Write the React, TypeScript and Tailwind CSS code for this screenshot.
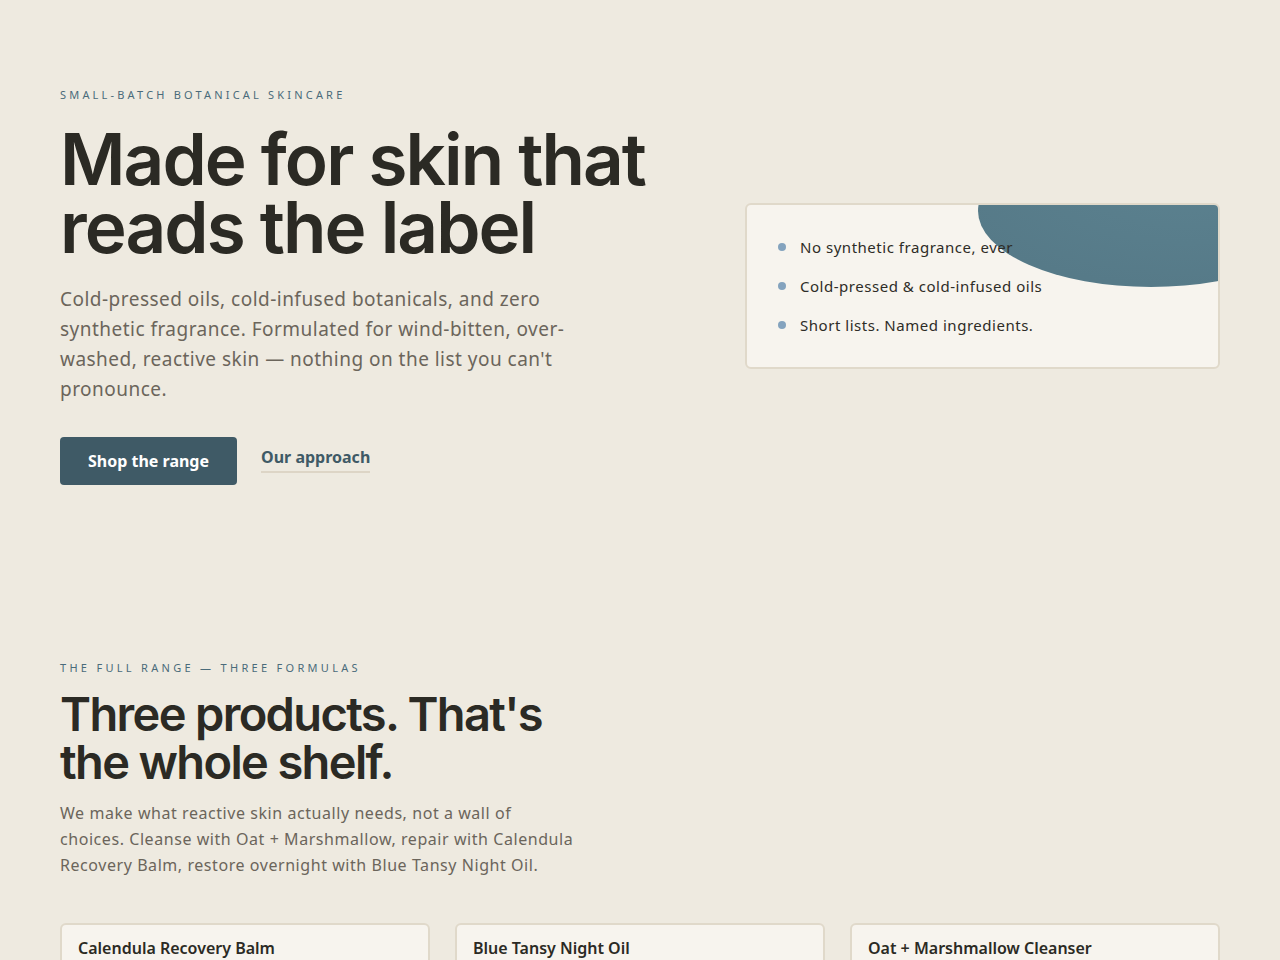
import React from 'react'

const points = [
  'No synthetic fragrance, ever',
  'Cold-pressed & cold-infused oils',
  'Short lists. Named ingredients.',
]

const products = [
  { name: 'Calendula Recovery Balm' },
  { name: 'Blue Tansy Night Oil' },
  { name: 'Oat + Marshmallow Cleanser' },
]

const body = "font-['Noto_Sans',sans-serif]"
const display = "font-['Inter',sans-serif]"

export default function App() {
  return (
    <div className={`min-h-screen bg-[#eeeae0] ${body}`}>
      <div className="px-[60px]">
        {/* hero */}
        <section className="grid grid-cols-[1fr_475px] gap-16 items-center pt-[87px]">
          <div>
            <div className="text-[11px] tracking-[0.29em] text-[#4a6b7a] uppercase leading-4">
              Small-batch botanical skincare
            </div>
            <h1 className={`${display} mt-[22px] text-[71px] leading-[68px] font-semibold tracking-[-0.027em] text-[#2b2a24]`}>
              Made for skin that
              <br />
              reads the label
            </h1>
            <p className="mt-[23px] max-w-[510px] text-[19px] leading-[30px] tracking-[0.025em] text-[#6b655b]">
              Cold-pressed oils, cold-infused botanicals, and zero synthetic fragrance. Formulated for wind-bitten, over-washed, reactive skin — nothing on the list you can't pronounce.
            </p>
            <div className="mt-[33px] flex items-center gap-6">
              <button className="h-12 px-7 rounded bg-[#3f5a66] text-white text-[16px] font-bold">
                Shop the range
              </button>
              <a className="text-[16px] font-bold text-[#3f5a66] border-b-2 border-[#ddd5c6] pb-0.5 -mt-1">
                Our approach
              </a>
            </div>
          </div>

          <div className="relative overflow-hidden rounded-md border-2 border-[#e0d9ca] bg-[#f7f4ee] px-[31px] py-[31px]">
            <svg className="absolute right-0 top-0" width="240" height="84" viewBox="0 0 240 84">
              <defs>
                <radialGradient id="blob" cx="0.6" cy="0.3" r="0.7">
                  <stop offset="0" stopColor="#5b818f" />
                  <stop offset="1" stopColor="#567a88" />
                </radialGradient>
              </defs>
              <ellipse cx="173" cy="6" rx="173" ry="76" fill="url(#blob)" />
            </svg>
            <ul className="relative flex flex-col gap-[17px]">
              {points.map((p) => (
                <li key={p} className="flex items-center gap-[14px] text-[15px] leading-[22px] tracking-[0.035em] text-[#2e2c27]">
                  <span className="w-2 h-2 rounded-full bg-[#84a3be] shrink-0" />
                  {p}
                </li>
              ))}
            </ul>
          </div>
        </section>

        {/* range */}
        <section className="pt-[175px]">
          <div className="text-[11px] tracking-[0.3em] text-[#4a6b7a] uppercase leading-4">
            The full range — three formulas
          </div>
          <h2 className={`${display} mt-[14px] text-[47px] leading-[48px] font-semibold tracking-[-0.035em] text-[#2b2a24]`}>
            Three products. That's
            <br />
            the whole shelf.
          </h2>
          <p className="mt-[14px] max-w-[518px] text-[16px] leading-[26px] tracking-[0.035em] text-[#6b655b]">
            We make what reactive skin actually needs, not a wall of choices. Cleanse with Oat + Marshmallow, repair with Calendula Recovery Balm, restore overnight with Blue Tansy Night Oil.
          </p>
          <div className="mt-[45px] grid grid-cols-3 gap-[25px]">
            {products.map((p) => (
              <div key={p.name} className="rounded-md border-2 border-[#e0d9ca] bg-[#f7f4ee] px-4 pt-[11px] pb-10">
                <h3 className="text-[16px] font-semibold text-[#2b2a24]">{p.name}</h3>
              </div>
            ))}
          </div>
        </section>
      </div>
    </div>
  )
}
